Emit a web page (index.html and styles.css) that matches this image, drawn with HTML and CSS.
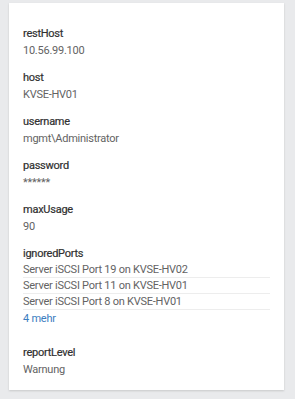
FILE: index.html
```html
<!DOCTYPE html>
<html lang="de">
<head>
  <meta charset="UTF-8" />
  <meta name="viewport" content="width=device-width, initial-scale=1.0"/>
  <title>Details</title>
  <link rel="stylesheet" href="styles.css">
</head>
<body>

<div class="card">

  <div class="field">
    <div class="label">restHost</div>
    <div class="value">10.56.99.100</div>
  </div>

  <div class="field">
    <div class="label">host</div>
    <div class="value">KVSE-HV01</div>
  </div>

  <div class="field">
    <div class="label">username</div>
    <div class="value">mgmt\Administrator</div>
  </div>

  <div class="field">
    <div class="label">password</div>
    <div class="value">******</div>
  </div>

  <div class="field">
    <div class="label">maxUsage</div>
    <div class="value">90</div>
  </div>

  <div class="field list-field">
    <div class="label">ignoredPorts</div>
    <ul class="value-list">
      <li>Server iSCSI Port 19 on KVSE-HV02</li>
      <li>Server iSCSI Port 11 on KVSE-HV01</li>
      <li>Server iSCSI Port 8 on KVSE-HV01</li>
    </ul>
    <a class="more" href="#">4 mehr</a>
  </div>

  <div class="field">
    <div class="label">reportLevel</div>
    <div class="value">Warnung</div>
  </div>

</div>

</body>
</html>
```

FILE: styles.css
```css
body {
  font-family: Roboto, "Liberation Sans", sans-serif;
  background-color: #e9eaec;
  margin: 0;
  padding: 3px 11px 12px 9px;
}

.card {
  background-color: white;
  padding: 22px 14px 12px 14px;
  box-shadow: 0px 1px 2px rgba(0, 0, 0, 0.15);
}

.field {
  margin-bottom: 10px;
}

.field:last-child {
  margin-bottom: 0;
}

.label,
.value,
.value-list li,
.more {
  font-size: 11px;
  letter-spacing: -0.25px;
}

.label {
  line-height: 17px;
  color: #303030;
  -webkit-text-stroke: 0.2px #303030;
}

.value {
  line-height: 17px;
  color: #636363;
}

.value-list {
  list-style: none;
  margin: 0;
  padding: 0;
}

.value-list li {
  line-height: 15px;
  color: #636363;
  border-bottom: 1px solid #ededed;
}

.more {
  display: block;
  line-height: 17px;
  color: #3b7dbf;
  text-decoration: none;
}

.list-field {
  margin-bottom: 17px;
}
```
